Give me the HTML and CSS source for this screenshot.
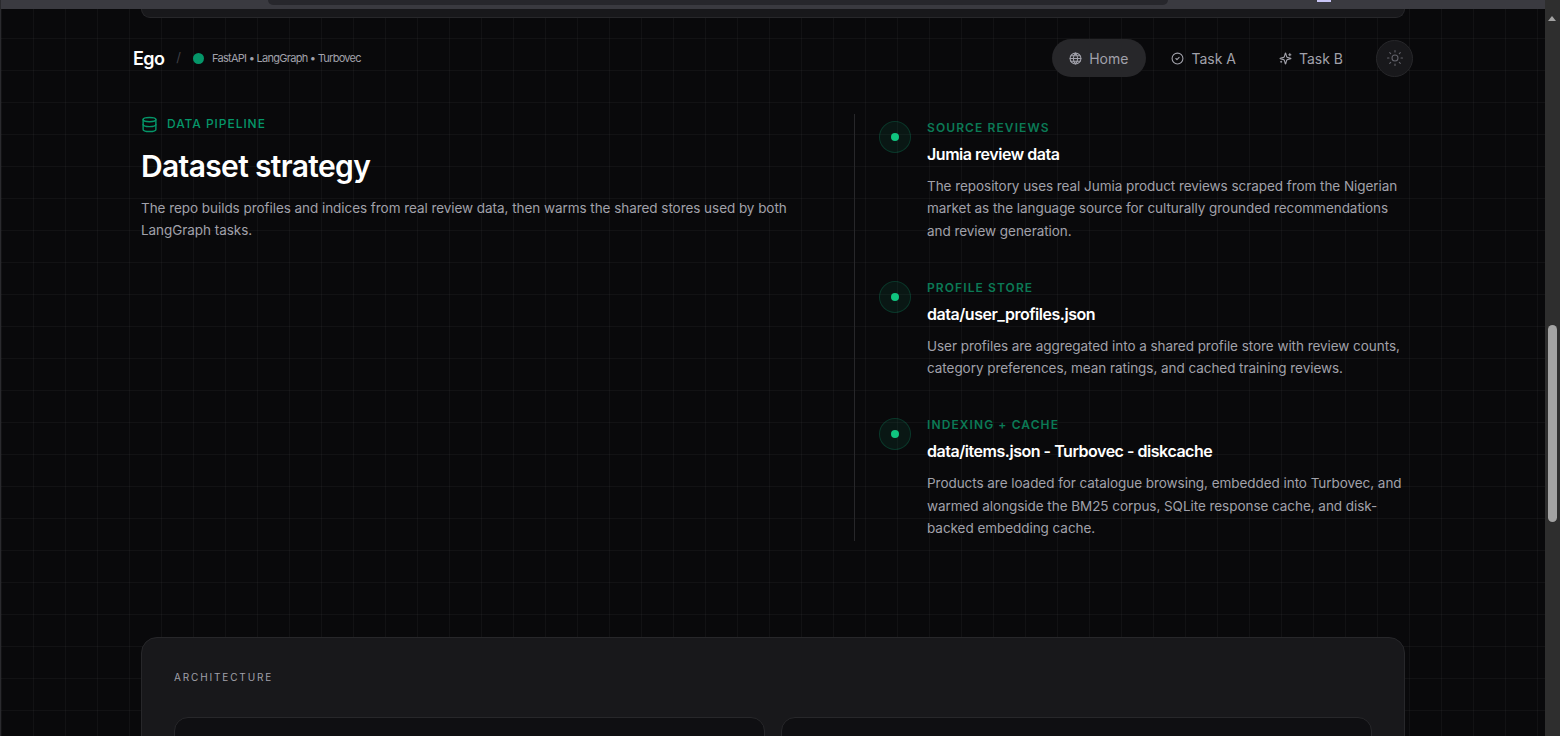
FILE: index.html
```html
<!DOCTYPE html>
<html lang="en">
<head>
    <meta charset="UTF-8">
    <meta name="viewport" content="width=device-width, initial-scale=1.0">
    <title>Ego</title>
    <link rel="stylesheet" href="styles.css">
</head>
<body>
    <div class="window">
        <main class="page">
            <div class="strip">
                <div class="stripTab"></div>
                <div class="stripMark"></div>
            </div>
            <div class="cardTail"></div>

            <header class="nav">
                <div class="brand">
                    <span class="brandName">Ego</span>
                    <span class="brandSlash">/</span>
                    <span class="brandDot"></span>
                    <span class="brandStack">FastAPI • LangGraph • Turbovec</span>
                </div>
                <nav class="navLinks">
                    <a href="#" class="navLink active">
                        <svg class="navIcon" viewBox="0 0 24 24"><circle cx="12" cy="12" r="10"/><path d="M12 2a14.5 14.5 0 0 0 0 20 14.5 14.5 0 0 0 0-20"/><path d="M2 12h20"/><path d="M3.5 7h17M3.5 17h17"/></svg>
                        Home
                    </a>
                    <a href="#" class="navLink">
                        <svg class="navIcon" viewBox="0 0 24 24"><circle cx="12" cy="12" r="10"/><path d="m9 12 2 2 4-4"/></svg>
                        Task A
                    </a>
                    <a href="#" class="navLink">
                        <svg class="navIcon" viewBox="0 0 24 24"><path d="M9.937 15.5A2 2 0 0 0 8.5 14.063l-6.135-1.582a.5.5 0 0 1 0-.962L8.5 9.936A2 2 0 0 0 9.937 8.5l1.582-6.135a.5.5 0 0 1 .963 0L14.063 8.5A2 2 0 0 0 15.5 9.937l6.135 1.581a.5.5 0 0 1 0 .964L15.5 14.063a2 2 0 0 0-1.437 1.437l-1.582 6.135a.5.5 0 0 1-.963 0z"/><path d="M20 3v4M22 5h-4M4 17v2M5 18H3"/></svg>
                        Task B
                    </a>
                    <button class="themeBtn">
                        <svg class="themeIcon" viewBox="0 0 24 24"><circle cx="12" cy="12" r="4"/><path d="M12 2v2M12 20v2M4.900 4.900l1.400 1.400M17.700 17.700l1.400 1.400M2 12h2M20 12h2M6.300 17.700l-1.400 1.400M19.100 4.900l-1.400 1.400"/></svg>
                    </button>
                </nav>
            </header>

            <div class="container">
                <section class="pipeline">
                    <div class="intro">
                        <div class="eyebrow">
                            <svg class="eyebrowIcon" viewBox="0 0 24 24"><ellipse cx="12" cy="5" rx="9" ry="3"/><path d="M3 5v14a9 3 0 0 0 18 0V5"/><path d="M3 12a9 3 0 0 0 18 0"/></svg>
                            <span>DATA PIPELINE</span>
                        </div>
                        <h1 class="introTitle">Dataset strategy</h1>
                        <p class="introText">The repo builds profiles and indices from real review data, then warms the shared stores used by both LangGraph tasks.</p>
                    </div>
                    <div class="steps">
                        <div class="step">
                            <div class="stepMark"><span></span></div>
                            <div class="stepBody">
                                <div class="stepLabel">SOURCE REVIEWS</div>
                                <div class="stepTitle">Jumia review data</div>
                                <p class="stepText">The repository uses real Jumia product reviews scraped from the Nigerian market as the language source for culturally grounded recommendations and review generation.</p>
                            </div>
                        </div>
                        <div class="step">
                            <div class="stepMark"><span></span></div>
                            <div class="stepBody">
                                <div class="stepLabel">PROFILE STORE</div>
                                <div class="stepTitle">data/user_profiles.json</div>
                                <p class="stepText">User profiles are aggregated into a shared profile store with review counts, category preferences, mean ratings, and cached training reviews.</p>
                            </div>
                        </div>
                        <div class="step">
                            <div class="stepMark"><span></span></div>
                            <div class="stepBody">
                                <div class="stepLabel">INDEXING + CACHE</div>
                                <div class="stepTitle">data/items.json - Turbovec - diskcache</div>
                                <p class="stepText">Products are loaded for catalogue browsing, embedded into Turbovec, and warmed alongside the BM25 corpus, SQLite response cache, and disk-backed embedding cache.</p>
                            </div>
                        </div>
                    </div>
                </section>

                <section class="arch">
                    <div class="archLabel">ARCHITECTURE</div>
                    <div class="archGrid">
                        <div class="archCard"></div>
                        <div class="archCard"></div>
                    </div>
                </section>
            </div>
        </main>

        <aside class="scrollbar">
            <div class="scrollUp"></div>
            <div class="scrollThumb"></div>
        </aside>
    </div>
</body>
</html>
```

FILE: styles.css
```css
html,body{
    margin: 0;
    padding: 0;
    height: 100%;
    overflow: hidden;
    background: #09090b;
    font: 14px/1.5 "Inter","Liberation Sans",sans-serif;
}
p,h1{
    margin: 0;
}
a{
    text-decoration: none;
    color: inherit;
}
svg{
    fill: none;
    stroke: currentColor;
    stroke-width: 2;
    stroke-linecap: round;
    stroke-linejoin: round;
    flex: none;
}
.window{
    display: flex;
    height: 736px;
    overflow: hidden;
}
.page{
    flex: 1;
    min-width: 0;
    border-left: 1px solid #2a2a2e;
    background-color: #09090b;
    background-image:
        linear-gradient(to right, rgba(255,255,255,0.035) 1px, transparent 1px),
        linear-gradient(to bottom, rgba(255,255,255,0.035) 1px, transparent 1px);
    background-size: 32px 32px;
    background-position: 0 6px;
}

/* what is left of the section above */
.strip{
    display: flex;
    height: 9px;
    background: #3a3a40;
}
.stripTab{
    width: 900px;
    height: 5px;
    margin-left: 267px;
    background: #27272c;
    border-radius: 0 0 6px 6px;
}
.stripMark{
    width: 14px;
    height: 2px;
    margin-left: 149px;
    background: #c9c6f7;
}
.cardTail{
    height: 8px;
    margin: 0 140px;
    background: #18181b;
    border: 1px solid #27272a;
    border-top: 0;
    border-radius: 0 0 16px 16px;
}

.nav{
    display: flex;
    justify-content: space-between;
    align-items: center;
    width: 1280px;
    margin: 21px auto 0;
    height: 38px;
}
.brand{
    display: flex;
    align-items: center;
}
.brandName{
    color: #fff;
    font-size: 18px;
    font-weight: 600;
    letter-spacing: -0.6px;
}
.brandSlash{
    margin-left: 12px;
    color: #3f3f46;
    font-size: 13px;
}
.brandDot{
    width: 11px;
    height: 11px;
    margin-left: 12px;
    border-radius: 50%;
    background: #059669;
}
.brandStack{
    margin-left: 8px;
    color: #a1a1aa;
    font-size: 11px;
    letter-spacing: -0.72px;
}
.navLinks{
    display: flex;
    align-items: center;
    gap: 8px;
}
.navLink{
    display: flex;
    align-items: center;
    gap: 7px;
    height: 38px;
    padding: 0 17.5px;
    border-radius: 19px;
    color: #a1a1aa;
    font-size: 14px;
}
.navLink.active{
    background: #27272a;
}
.navIcon{
    width: 13px;
    height: 13px;
}
.themeBtn{
    display: flex;
    align-items: center;
    justify-content: center;
    width: 37px;
    height: 37px;
    margin-left: 7.5px;
    padding: 0;
    border: 1px solid #27272a;
    border-radius: 50%;
    background: #18181b;
    color: #63636b;
}
.themeIcon{
    width: 18px;
    height: 18px;
    stroke-width: 1.4;
}

.container{
    width: 1264px;
    margin: 37px auto 0;
}
.pipeline{
    display: grid;
    grid-template-columns: 713px 1fr;
}
.intro{
    padding: 1px 64px 0 0;
}
.eyebrow{
    display: flex;
    align-items: center;
    gap: 9px;
    height: 18px;
    color: #059669;
    font-size: 12px;
    font-weight: 500;
    letter-spacing: 0.95px;
}
.eyebrowIcon{
    width: 17px;
    height: 17px;
}
.introTitle{
    margin-top: 13px;
    color: #fff;
    font-size: 30px;
    line-height: 40px;
    font-weight: 600;
    letter-spacing: -0.65px;
}
.introText{
    margin-top: 11px;
    color: #a1a1aa;
    font-size: 13.5px;
    line-height: 22px;
    letter-spacing: -0.05px;
}
.steps{
    display: flex;
    flex-direction: column;
    gap: 37.25px;
    padding: 6px 0 1px 24px;
    border-left: 1px solid #27272a;
}
.step{
    display: flex;
    gap: 16px;
}
.stepMark{
    display: flex;
    align-items: center;
    justify-content: center;
    flex: none;
    width: 32px;
    height: 32px;
    margin-top: 1px;
    box-sizing: border-box;
    border: 1px solid rgba(16,185,129,0.2);
    border-radius: 50%;
    background: rgba(16,185,129,0.08);
}
.stepMark span{
    width: 8px;
    height: 8px;
    border-radius: 50%;
    background: #10c47f;
}
.stepLabel{
    color: #0b7a56;
    font-size: 12px;
    line-height: 16px;
    font-weight: 600;
    letter-spacing: 1.1px;
}
.stepTitle{
    margin-top: 6px;
    color: #fff;
    font-size: 16px;
    line-height: 24px;
    font-weight: 600;
    letter-spacing: -0.47px;
}
.stepText{
    margin-top: 8.5px;
    color: #a1a1aa;
    font-size: 13.5px;
    line-height: 22.75px;
    letter-spacing: -0.05px;
}

.arch{
    margin-top: 96px;
    padding: 32px;
    border: 1px solid #27272a;
    border-radius: 16px;
    background: #18181b;
}
.archLabel{
    color: #a1a1aa;
    font-size: 10px;
    line-height: 15px;
    letter-spacing: 1.85px;
}
.archGrid{
    display: grid;
    grid-template-columns: 1fr 1fr;
    gap: 16px;
    margin-top: 32px;
}
.archCard{
    height: 200px;
    border: 1px solid #27272a;
    border-radius: 14px;
    background: #0f0f12;
}

.scrollbar{
    position: relative;
    flex: none;
    width: 15px;
    background: #2e2e2e;
}
.scrollUp{
    position: absolute;
    top: 16px;
    left: 3px;
    border-left: 4.5px solid transparent;
    border-right: 4.5px solid transparent;
    border-bottom: 5px solid #a3a3a3;
}
.scrollThumb{
    position: absolute;
    top: 325px;
    left: 3px;
    width: 9px;
    height: 197px;
    border-radius: 5px;
    background: #a3a3a3;
}
```
